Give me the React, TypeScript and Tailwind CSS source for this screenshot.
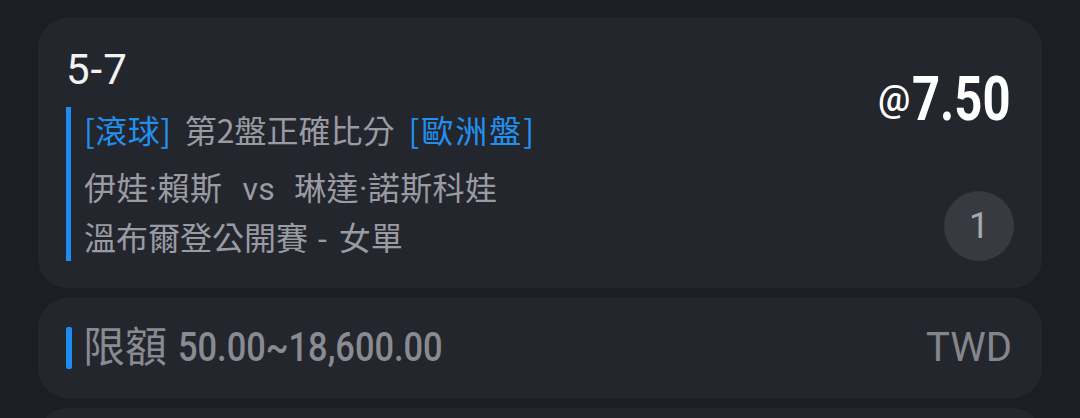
import React from 'react';

const cjk = "font-['Roboto','Noto_Sans_CJK_TC',sans-serif]";
const cjkFirst = "font-['Noto_Sans_CJK_TC',sans-serif]";

const BetCard = () => {
    return (
        <div className="flex rounded-[30px] bg-[#24262e] pl-[28px] pr-[30px] pt-[28px] pb-[27px]">
            <div className="flex-1">
                <div className="text-[42px] leading-[48px] tracking-[1px] text-[#f2f2f4] font-['Roboto',sans-serif]">5-7</div>
                <div className={`mt-[13px] border-l-[5px] border-[#1d8cf0] pl-[13px] text-[32px] text-[#9a9ba2] ${cjk}`}>
                    <div className={`flex h-[44px] items-center mb-[16px] ${cjkFirst}`}>
                        <span className="text-[#2190ee] tracking-[0.5px]">[滾球]</span>
                        <span className="ml-[13px]">第2盤正確比分</span>
                        <span className="ml-[14px] text-[#2190ee] tracking-[2px]">[歐洲盤]</span>
                    </div>
                    <div className="leading-[44px] mb-[6px] tracking-[0.4px]">
                        伊娃·賴斯<span className="ml-[20px] mr-[19px]">vs</span>琳達·諾斯科娃
                    </div>
                    <div className="leading-[44px]">
                        溫布爾登公開賽<span className="ml-[10px] mr-[12px]">-</span>女單
                    </div>
                </div>
            </div>
            <div className="flex flex-col items-end justify-between">
                <div className="mt-[23px] flex items-center font-['Roboto',sans-serif] text-white">
                    <span className="text-[36px] leading-[60px] font-medium mr-[2px]">@</span>
                    <span className="inline-block text-[62px] leading-[60px] font-bold origin-left scale-x-[0.79] -mr-[25px]">7.50</span>
                </div>
                <div className="flex h-[70px] w-[70px] items-center justify-center rounded-full bg-[#393a41] -mr-[2px] text-[36px] text-[#a8a9b0] font-['Roboto',sans-serif]">
                    1
                </div>
            </div>
        </div>
    );
};

const LimitCard = () => {
    return (
        <div className="flex h-[100px] items-center justify-between rounded-[30px] bg-[#24262e] pl-[28px] pr-[30px]">
            <div className="flex items-center">
                <div className="h-[42px] w-[6px] rounded-[2px] bg-[#1d8cf0]" />
                <span className={`ml-[11px] text-[42px] leading-[48px] text-[#8a8b92] ${cjk}`}>限額</span>
                <span className="ml-[11px] inline-block origin-left scale-x-[0.86] text-[40px] leading-[48px] font-medium text-[#8a8b92] font-['Roboto',sans-serif]">
                    50.00~18,600.00
                </span>
            </div>
            <span className="text-[40px] leading-[44px] text-[#85868d] font-['Roboto',sans-serif]">TWD</span>
        </div>
    );
};

const App = () => {
    return (
        <div className="h-[418px] overflow-hidden bg-[#1c1e25] px-[38px] pt-[18px]">
            <div className="flex flex-col gap-[10px]">
                <BetCard />
                <LimitCard />
                <div className="h-[100px] rounded-[30px] bg-[#24262e]" />
            </div>
        </div>
    );
};

export default App;
